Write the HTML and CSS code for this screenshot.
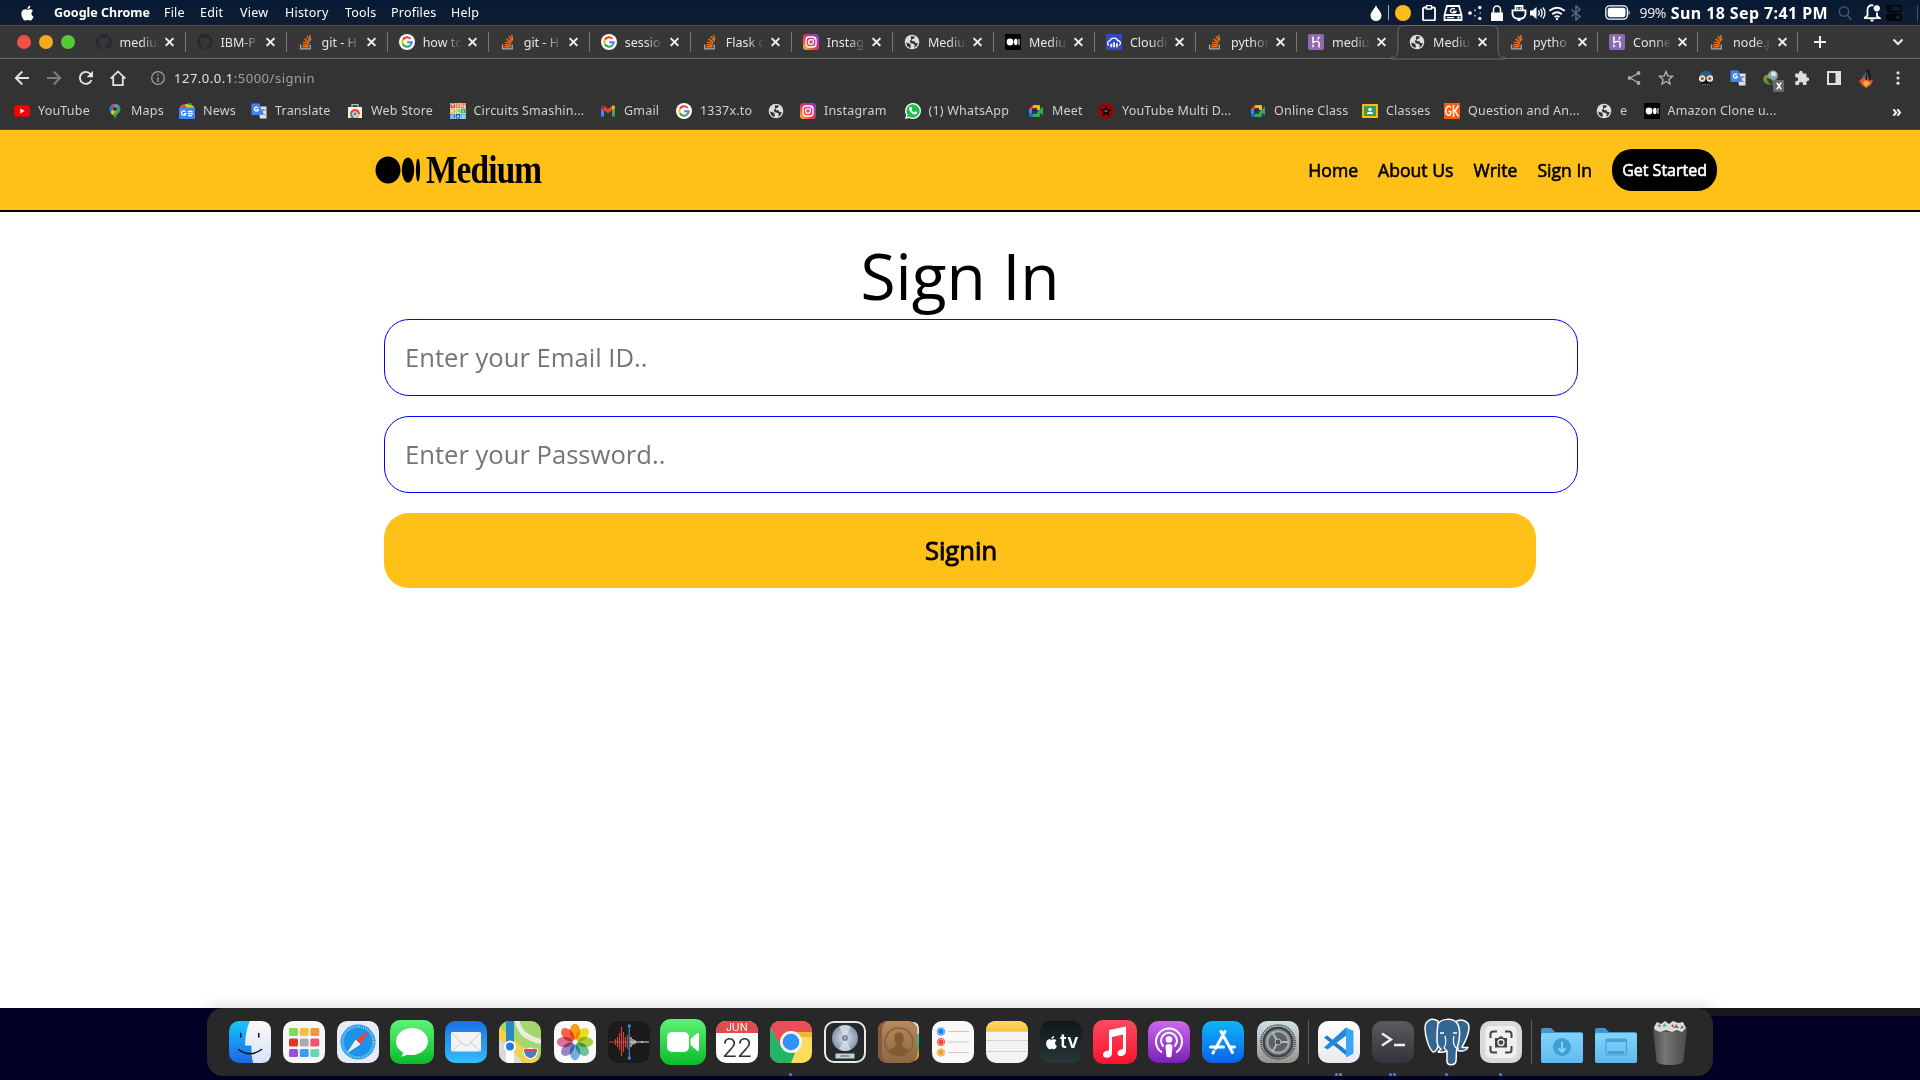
FILE: index.html
```html
<!DOCTYPE html>
<html lang="en">
<head>
<meta charset="utf-8">
<title>Medium - Sign In</title>
<link rel="stylesheet" href="styles.css">
</head>
<body>
<svg class="defs" aria-hidden="true">
  <defs>
    <linearGradient id="g-insta" x1="0" y1="1" x2="1" y2="0"><stop offset="0" stop-color="#fdc74a"/><stop offset=".35" stop-color="#f4483c"/><stop offset=".65" stop-color="#c62f92"/><stop offset="1" stop-color="#5a4fd8"/></linearGradient>
    <linearGradient id="g-green" x1="0" y1="0" x2="0" y2="1"><stop offset="0" stop-color="#5ff377"/><stop offset="1" stop-color="#0abb29"/></linearGradient>
    <linearGradient id="g-blue" x1="0" y1="0" x2="0" y2="1"><stop offset="0" stop-color="#1a72e6"/><stop offset="1" stop-color="#35bdf8"/></linearGradient>
    <linearGradient id="g-find" x1="0" y1="0" x2="0" y2="1"><stop offset="0" stop-color="#14c8fb"/><stop offset="1" stop-color="#1e65e6"/></linearGradient>
    <linearGradient id="g-face" x1="0" y1="0" x2="0" y2="1"><stop offset="0" stop-color="#fdf8f8"/><stop offset="1" stop-color="#d3e4fc"/></linearGradient>
    <linearGradient id="g-white" x1="0" y1="0" x2="0" y2="1"><stop offset="0" stop-color="#fff"/><stop offset="1" stop-color="#e9e9ee"/></linearGradient>
    <linearGradient id="g-store" x1="0" y1="0" x2="0" y2="1"><stop offset="0" stop-color="#0fb4fb"/><stop offset="1" stop-color="#0b63e6"/></linearGradient>
    <linearGradient id="g-music" x1="0" y1="0" x2="0" y2="1"><stop offset="0" stop-color="#fb4a63"/><stop offset="1" stop-color="#f9142c"/></linearGradient>
    <linearGradient id="g-pod" x1="0" y1="0" x2="0" y2="1"><stop offset="0" stop-color="#cd66f5"/><stop offset="1" stop-color="#7a21b4"/></linearGradient>
    <linearGradient id="g-term" x1="0" y1="0" x2="0" y2="1"><stop offset="0" stop-color="#5c5960"/><stop offset="1" stop-color="#34323a"/></linearGradient>
    <linearGradient id="g-set" x1="0" y1="0" x2="0" y2="1"><stop offset="0" stop-color="#cfe0e6"/><stop offset="1" stop-color="#96938c"/></linearGradient>
    <linearGradient id="g-book" x1="0" y1="0" x2="0" y2="1"><stop offset="0" stop-color="#b78a5f"/><stop offset="1" stop-color="#8f673f"/></linearGradient>
    <linearGradient id="g-fold" x1="0" y1="0" x2="0" y2="1"><stop offset="0" stop-color="#83d3fa"/><stop offset="1" stop-color="#5cbbee"/></linearGradient>
    <linearGradient id="g-bin" x1="0" y1="0" x2="1" y2="0"><stop offset="0" stop-color="#4b4b4b"/><stop offset=".35" stop-color="#777674"/><stop offset="1" stop-color="#4a4a49"/></linearGradient>
    <linearGradient id="g-note" x1="0" y1="0" x2="0" y2="1"><stop offset="0" stop-color="#ffd968"/><stop offset="1" stop-color="#f8c63c"/></linearGradient>
    <radialGradient id="g-disc"><stop offset="0" stop-color="#8a98ad"/><stop offset=".3" stop-color="#c5cedd"/><stop offset="1" stop-color="#8493ac"/></radialGradient>

    <symbol id="apple" viewBox="0 0 24 24"><path d="M16.6 12.7c0-2.4 2-3.6 2.1-3.7-1.2-1.7-3-1.9-3.6-1.9-1.5-.2-3 .9-3.8.9s-2-.9-3.200-.9C6.400 7.100 4.900 8.100 4 9.600c-1.800 3-.5 7.500 1.200 10 .9 1.200 1.900 2.600 3.200 2.500 1.300-.1 1.800-.8 3.300-.8s2 .8 3.300.8 2.200-1.200 3-2.400c1-1.400 1.400-2.700 1.400-2.800 0 0-2.800-1-2.800-4.200zM14.100 5.400c.7-.8 1.200-2 1-3.200-1 0-2.200.7-2.900 1.500-.6.7-1.200 1.900-1 3 1.100.1 2.200-.5 2.900-1.300z"/></symbol>
    <symbol id="github" viewBox="0 0 16 16"><path fill="#24292e" d="M8 0a8 8 0 0 0-2.500 15.600c.4.100.5-.2.500-.4v-1.500c-2.200.5-2.700-.9-2.700-.9-.4-.9-.9-1.200-.9-1.200-.7-.5.1-.5.1-.5.800.1 1.200.8 1.200.8.700 1.200 1.900.9 2.300.7.100-.5.300-.9.500-1.100-1.800-.2-3.600-.9-3.600-4 0-.9.300-1.600.8-2.100-.1-.2-.4-1 .1-2.100 0 0 .7-.2 2.200.8a7.600 7.600 0 0 1 4 0c1.500-1 2.200-.8 2.200-.8.400 1.100.2 1.900.1 2.100.5.600.8 1.300.8 2.100 0 3.100-1.900 3.700-3.700 3.900.3.300.6.800.6 1.500v2.200c0 .2.100.5.500.4A8 8 0 0 0 8 0z"/></symbol>
    <symbol id="stack" viewBox="0 0 16 16"><path fill="none" stroke="#a9adb2" stroke-width="1.300" d="M2.600 10.500v4.300h9.600v-4.300"/><path fill="none" stroke="#f0701a" stroke-width="1.400" d="M4.300 12.700h6.200M4.500 10.500l6.100.7M5.200 7.800l5.700 1.800M6.500 4.900l4.900 3.500M8.900 2.200l3.400 5M11.600.8l1.100 5.400"/></symbol>
    <symbol id="google" viewBox="0 0 16 16"><circle cx="8" cy="8" r="8" fill="#fff"/><g fill="none" stroke-width="2.100"><path stroke="#ea4335" d="M11.500 4.900A4.700 4.700 0 0 0 3.900 5.700"/><path stroke="#fbbc05" d="M3.900 5.700a4.700 4.700 0 0 0 0 4.600"/><path stroke="#34a853" d="M3.900 10.300a4.700 4.700 0 0 0 7.300 1.100"/><path stroke="#4285f4" d="M11.200 11.400A4.700 4.700 0 0 0 12.700 8.200H8.200"/></g></symbol>
    <symbol id="insta" viewBox="0 0 16 16"><rect width="16" height="16" rx="3.500" fill="url(#g-insta)"/><g fill="none" stroke="#fff" stroke-width="1.300"><rect x="3" y="3" width="10" height="10" rx="3"/><circle cx="8" cy="8" r="2.400"/></g><circle cx="11" cy="5" r=".8" fill="#fff"/></symbol>
    <symbol id="globe" viewBox="0 0 16 16"><circle cx="8" cy="8" r="7.300" fill="#dedede"/><path fill="#333" d="M2.200 8.500 6 9.800l.8 1.700L6.500 14C4 13.500 2.300 11.500 2.200 8.500zM6.800 2.200 11 2.500l-1 2-2 .7-.5 1.800 2.800.2 1.500 2 2-.2c-.3 2.200-1.800 4-3.800 4.600l1-2.300-1.600-1.600-2.700-.5-1-2 1.500-1.800z"/></symbol>
    <symbol id="med" viewBox="0 0 16 16"><rect width="16" height="16" rx="1" fill="#000"/><circle cx="5" cy="8" r="3.400" fill="#fff"/><ellipse cx="10.800" cy="8" rx="1.800" ry="3.200" fill="#fff"/><rect x="13.500" y="5" width="1" height="6" fill="#fff"/></symbol>
    <symbol id="cloud" viewBox="0 0 16 16"><rect width="16" height="16" fill="#3448c5"/><path fill="none" stroke="#fff" stroke-width="1.300" d="M3 11.500C.5 10 1.500 6.800 4 6.800c1-3.300 6.500-3.600 7.600-.3 3 .1 4 3.700 1.500 5"/><path stroke="#fff" stroke-width="1.800" d="M5.300 9.800v3.500M8.100 8.200v5.100M10.900 9.200v4.100"/></symbol>
    <symbol id="heroku" viewBox="0 0 16 16"><rect width="16" height="16" rx="2" fill="#8f69b3"/><path fill="none" stroke="#fff" stroke-width="1.500" d="M5 2.500v6c2-1.200 6-2 6 .6v4.400M11 2.500c0 1.300-.6 2.200-1.300 3"/><path fill="#fff" d="m4.300 10.300 2.300 1.700-2.300 1.700z"/></symbol>
    <symbol id="yt" viewBox="0 0 16 16"><rect y="2.300" width="16" height="11.500" rx="3" fill="#f00"/><path fill="#fff" d="m6.300 5.500 4.400 2.500-4.400 2.500z"/></symbol>
    <symbol id="maps" viewBox="0 0 16 16"><path fill="#34a853" d="M2.500 6.200C2.500-.7 13.500-.7 13.500 6.200 13.500 10 9 11 8 16 7 11 2.500 10 2.500 6.200z"/><path fill="#ea4335" d="M3.600 2.800 6.400 5.300 8 1V1C6 .9 4.300 1.700 3.600 2.800z"/><path fill="#4285f4" d="M8 1c2 0 3.700.8 4.600 2.200L8.800 7.700 6.200 5.500z"/><path fill="#fbbc04" d="m3.500 9.300 6-7 .6 5.300-4.700 4.500z"/><path fill="#1a73e8" d="M3.600 2.800 6.400 5.300 3.200 9C2 6.500 2.500 4 3.600 2.800z"/><circle cx="8" cy="6" r="2" fill="#333"/></symbol>
    <symbol id="news" viewBox="0 0 16 16"><path fill="#34a853" d="M2 2 12 0l2 6H2z"/><path fill="#fbbc04" d="m6 1 9 2-1 4H6z"/><path fill="#ea4335" d="M1 3h6v4H1z"/><rect y="4.500" width="16" height="11.500" rx="1" fill="#4285f4"/><path fill="none" stroke="#fff" stroke-width="1.300" d="M6.500 8.700a2.200 2.200 0 1 0 .4 1.900H5M9 8.500h4.500M9 10.600h5M9 12.600h4"/></symbol>
    <symbol id="trans" viewBox="0 0 16 16"><path fill="#dfe3e8" d="M7 3.500h8.500v12H9z"/><path fill="none" stroke="#6b7c8c" d="M9.500 7h5M12 6v1c-.3 2-1.500 3.500-2.500 4.500M10.500 8.500l3.500 4"/><path fill="#4285f4" d="M.5.500h8L12 12H.5z"/><path fill="none" stroke="#fff" stroke-width="1.200" d="M7 4.800a2 2 0 1 0 .4 1.700H5.500"/></symbol>
    <symbol id="store" viewBox="0 0 16 16"><path fill="none" stroke="#bbb" stroke-width="1.300" d="M5 4V1.700h6V4"/><path fill="#eee" d="M1 4h14v11H1z"/><path fill="#ea4335" d="M3 11a5 5 0 0 1 10 0z"/><path fill="#34a853" d="M3 11h3l1 4H4z"/><path fill="#fbbc04" d="M9 11h4l-2 4H7z"/><circle cx="8" cy="11" r="2.300" fill="#4285f4" stroke="#fff"/></symbol>
    <symbol id="tink" viewBox="0 0 16 16"><rect width="16" height="16" fill="#fff"/><path fill="#e8453c" d="M.3.300h4.800v4.800H.3z"/><path fill="#f2803e" d="M5.600.3h4.800v4.800H5.600z"/><path fill="#f05a35" d="M10.900.3h4.800v4.800h-4.800z"/><path fill="#f5a623" d="M.3 5.600h4.800v4.800H.3z"/><path fill="#8cc63f" d="M5.600 5.600h4.800v4.800H5.600z"/><path fill="#3aaa57" d="M10.900 5.600h4.800v4.800h-4.800z"/><path fill="#2d7fc4" d="M.3 10.900h4.800v4.800H.3z"/><path fill="#1b5fa8" d="M5.600 10.900h4.800v4.800H5.600z"/><path fill="#3aa6dd" d="M10.900 10.900h4.800v4.800h-4.800z"/><path stroke="#fff" stroke-width=".8" fill="none" d="M1.400 1.600h2.800M2.800 1.600v2.800M8 1.300v3M12 4.500v-3l2.500 3v-3M1.700 6.600v3M4 6.500 2 8l2 1.600M9 7H7v2.500h2M13 6.600v3M4 12.200H1.800v2.500H4M7 14.700l1-2.500 1 2.500M12.500 12v3h1l1-1.500-1-1.500z"/></symbol>
    <symbol id="gmail" viewBox="0 0 16 16"><path fill="#4285f4" d="M1 4.500v9h3V7z"/><path fill="#34a853" d="M15 4.500v9h-3V7z"/><path fill="#c5221f" d="M1 4.500C1 2.500 3 2 4 3v4.300L1 5z"/><path fill="#fbbc04" d="M15 4.500c0-2-2-2.500-3-1.500v4.300L15 5z"/><path fill="#ea4335" d="m4 3 4 3 4-3v4.300l-4 3-4-3z"/></symbol>
    <symbol id="whats" viewBox="0 0 16 16"><path fill="#fff" d="M8 0a8 8 0 0 1 0 16c-1.400 0-2.700-.3-3.800-1L0 16l1.100-4A8 8 0 0 1 8 0z"/><path fill="#20bd4e" d="M8 1.300a6.700 6.700 0 1 1-3.500 12.400l-2.600.6.700-2.500A6.700 6.700 0 0 1 8 1.300z"/><path fill="#fff" d="m5.500 4 1 .1.700 1.800-.7 1c.6 1.200 1.500 2 2.700 2.500l1-1.100 1.900 1c0 1.500-1 2.200-2.200 2.100C6.800 11 4 8 4.200 5.500c0-.6.500-1.300 1.300-1.500z"/></symbol>
    <symbol id="meet" viewBox="0 0 16 16"><path fill="#ea4335" d="M1 6 5 2v4z"/><path fill="#4285f4" d="M1 6h3v5H1z"/><path fill="#1967d2" d="M1 10.500h3.500V14H2q-1 0-1-1z"/><path fill="#fbbc04" d="M5 2h6q1 0 1 1v4H9V5H5z"/><path fill="#34a853" d="M4.500 10.800H9V9l6-5.500v9L12 10v3q0 1-1 1H4.500z"/></symbol>
    <symbol id="multi" viewBox="0 0 16 16"><circle cx="8" cy="8" r="8" fill="#8e0808"/><path fill="#140303" d="m8 2 1.600 4.200 4.400.2-3.500 2.700 1.200 4.400L8 11l-3.700 2.500 1.200-4.400L2 6.400l4.400-.2z"/><path stroke="#c99" d="M6.500 8h3"/></symbol>
    <symbol id="classr" viewBox="0 0 16 16"><rect y="1" width="16" height="14" rx="1" fill="#fbbc04"/><path fill="#3c9a5b" d="M2 3h12v10H2z"/><circle cx="8" cy="6.300" r="1.600" fill="#fff"/><path fill="#fff" d="M4.800 11c0-3 6.400-3 6.400 0z"/></symbol>
    <symbol id="gk" viewBox="0 0 16 16"><rect width="16" height="16" fill="#ff5a0a"/><path fill="none" stroke="#fff" stroke-width="1.500" d="M7 4.500C4 1.500 1.700 5 1.700 8s2.500 6 5 3V8.500H4.500M9.500 2v12M14.500 2.500 11 8l3.500 5.500"/></symbol>

    <symbol id="back" viewBox="0 0 16 16"><path fill="none" stroke="currentColor" stroke-width="1.900" d="M15 8H2M8.300 1.500 1.800 8l6.500 6.500"/></symbol>
    <symbol id="reload" viewBox="0 0 16 16"><path fill="none" stroke="currentColor" stroke-width="1.900" d="M13.500 10A6 6 0 1 1 12.500 4L14 5.800"/><path fill="currentColor" d="M15 .8v6.400H8.600z"/></symbol>
    <symbol id="home" viewBox="0 0 16 16"><path fill="none" stroke="currentColor" stroke-width="1.800" d="M.6 8.600 8 1.400l7.400 7.200M3.200 7v8.100h9.600V7"/></symbol>
    <symbol id="info" viewBox="0 0 16 16"><circle cx="8" cy="8" r="6.300" fill="none" stroke="#9aa0a6" stroke-width="1.200"/><path stroke="#9aa0a6" stroke-width="1.400" d="M8 7.200V12M8 4.200v1.600"/></symbol>
    <symbol id="share" viewBox="0 0 16 16"><path fill="none" stroke="#aaa" stroke-width="1.300" d="M13 3 4 8l9 5"/><g fill="#aaa"><circle cx="12.500" cy="3" r="1.900"/><circle cx="3.500" cy="8" r="1.900"/><circle cx="12.500" cy="13" r="1.900"/></g></symbol>
    <symbol id="star" viewBox="0 0 16 16"><path fill="none" stroke="#b0b0b0" stroke-width="1.400" d="m8 1.500 1.800 4.400 4.700.4-3.600 3.100 1.100 4.600-4-2.500L4 14l1.100-4.600-3.600-3.100 4.700-.4z"/></symbol>
    <symbol id="robot" viewBox="0 0 16 16"><path fill="#25617a" d="M1 8.500C1-2 15-2 15 8.500z"/><path fill="#11181d" d="M3 9h10v5l-1.500 2h-7L3 14z"/><path stroke="#4f93a8" stroke-width="1.500" stroke-dasharray="1.500 1" d="M4 14.800h8"/><circle cx="4.200" cy="8.600" r="2.700" fill="#f7c9bb" stroke="#e8e8e8" stroke-width="1.200"/><circle cx="11.800" cy="8.600" r="2.700" fill="#f7c9bb" stroke="#e8e8e8" stroke-width="1.200"/><circle cx="4.300" cy="8.600" r="1.500" fill="#d3402c"/><circle cx="11.700" cy="8.600" r="1.500" fill="#d3402c"/></symbol>
    <symbol id="idm" viewBox="0 0 22 22"><path fill="#5f8f3e" d="M1 9q2-6 7-4l6 6-4 4q-8 0-9-6z"/><path fill="#b58a2b" d="M2 8q1-3 4-3l-2 7z"/><circle cx="11" cy="5.500" r="5" fill="#87a3b6"/><circle cx="11.500" cy="4" r="2.500" fill="#dfe5c8"/><path fill="#2f4a31" d="m4 8 5 1 3 4-4 2z"/><rect x="11" y="10" width="12" height="12" rx="2" fill="#66696c"/><path stroke="#fff" stroke-width="1.500" d="m14.800 12.700 4.400 6.600M19.200 12.700l-4.400 6.600"/></symbol>
    <symbol id="puzzle" viewBox="0 0 16 16"><path fill="#dcdcdc" d="M13.500 7.500h-1V4.800c0-.8-.6-1.300-1.300-1.300H8.700v-1a1.800 1.800 0 0 0-3.600 0v1H2.500c-.8 0-1.300.5-1.300 1.300v2.400h1a2 2 0 0 1 0 4h-1v2.500c0 .7.500 1.300 1.300 1.300H5v-1a2 2 0 0 1 4 0v1h2.300c.7 0 1.300-.6 1.300-1.300v-2.600h.9a1.800 1.800 0 0 0 0-3.600z"/></symbol>
    <symbol id="panel" viewBox="0 0 16 16"><path fill="#e0e0e0" fill-rule="evenodd" d="M1 1h14v14H1zM3 3v10h6.500V3z"/></symbol>
    <symbol id="avatar" viewBox="0 0 16 20"><path fill="#161a28" d="m9.500 0 4 8-3 5-6-2z"/><path fill="#31707a" d="m4 9 5-6-2 9z"/><path fill="#dc3b59" d="m9.500 4 1.500 9-2 1z"/><path fill="#e9582c" d="m1 13 5-4 3 4 6-1-2 5-5 3-4-3z"/><path fill="#f7b733" d="m5 15 3-3 4 3-4 4z"/></symbol>

    <symbol id="drop" viewBox="0 0 16 16"><path d="M8 0c1 4 5.500 6.500 5.500 10.500a5.500 5.500 0 0 1-11 0C2.500 6.500 7 4 8 0z"/></symbol>
    <symbol id="clip" viewBox="0 0 16 16"><rect x="2" y="2.500" width="12" height="13" rx="1.500" fill="none" stroke="#fff" stroke-width="1.800"/><path fill="#0b1a31" stroke="#fff" stroke-width="1.300" d="M5.500.5h5v3.500h-5z"/></symbol>
    <symbol id="disk" viewBox="0 0 20 16"><path fill="none" stroke="#fff" stroke-width="1.800" d="M4 1h12l2.500 9v5h-17v-5zM1.500 10h17"/><path fill="none" stroke="#fff" stroke-width="1.300" d="M12 4a3 2 0 1 0 1 2.500h-3M4 12.700h7"/><circle cx="15.500" cy="12.600" r="1.200"/></symbol>
    <symbol id="dots" viewBox="0 0 16 16"><circle cx="2.300" cy="8" r="2.100"/><circle cx="13.500" cy="1.800" r="1.900"/><circle cx="13.500" cy="14.200" r="1.900"/><g opacity=".6"><circle cx="8" cy="4.800" r="1.200"/><circle cx="8" cy="11.200" r="1.200"/><circle cx="14" cy="8" r="1"/></g></symbol>
    <symbol id="lock" viewBox="0 0 16 16"><path d="M2 7.500h12V16H2z"/><path fill="none" stroke="#fff" stroke-width="1.600" d="M4.500 8V4.500a3.500 3.500 0 0 1 7 0V8"/></symbol>
    <symbol id="usb" viewBox="0 0 16 16"><path fill="none" stroke="#fff" stroke-width="1.800" d="M4.500 5V1h7v4M1.500 5.300h13v4q-1 4-4.500 4.400H6Q2.500 13.300 1.500 9.300z"/><path d="M6.500 13h3v3h-3zM6 2.500h1.300V4H6zM8.700 2.500H10V4H8.700z"/></symbol>
    <symbol id="vol" viewBox="0 0 16 16"><path d="M0 5.500h2.500L6.500 2v12l-4-3.500H0z"/><path fill="none" stroke="#fff" stroke-width="1.300" d="M8.300 5.500q2 2.500 0 5M10.600 4q3 4 0 8M12.900 2.500q4.200 5.500 0 11"/></symbol>
    <symbol id="wifi" viewBox="0 0 16 16"><path fill="none" stroke="#fff" stroke-width="1.800" d="M.3 5.800q7.700-6 15.400 0M3.200 9.200q4.800-4 9.600 0M5.600 12q2.400-1.800 4.800 0"/><circle cx="8" cy="14" r="1.200"/></symbol>
    <symbol id="bt" viewBox="0 0 16 16"><path fill="none" stroke="#56657a" stroke-width="1.600" d="m3.500 4.500 8.500 7L8 15V1l4 3.500-8.500 7"/></symbol>
    <symbol id="batt" viewBox="0 0 28 16"><rect x="1" y="1" width="23" height="14" rx="4" fill="none" stroke="#fff" stroke-width="1.400"/><rect x="3" y="3" width="19" height="10" rx="2.300"/><path d="M25.300 5q2.400 3 0 6z"/></symbol>
    <symbol id="find" viewBox="0 0 16 16"><circle cx="7" cy="6.500" r="4.700" fill="none" stroke="#485568" stroke-width="1.500"/><path stroke="#485568" stroke-width="1.700" d="m10.300 10 4 5"/></symbol>
    <symbol id="bell" viewBox="0 0 18 18"><path fill="none" stroke="#fff" stroke-width="1.800" d="M1 14.200h15.500L14 12V8.500M10.500 1.500C6.500.5 4.500 3 4.500 6v5.500L1.500 14"/><path d="M6.500 15.500h5L9 18z"/><circle cx="13.800" cy="4.300" r="3.100"/></symbol>
    <symbol id="tog" viewBox="0 0 16 16"><rect x=".7" y=".7" width="14.600" height="6" rx="3" fill="none" stroke="#020509" stroke-width="1.400"/><circle cx="4" cy="3.700" r="2" fill="#020509"/><rect y="8.500" width="16" height="7.500" rx="3.700" fill="#020509"/><circle cx="12" cy="12.200" r="2" fill="#14233a"/></symbol>
  </defs>
</svg>

<div class="desktop">
  <header class="menubar">
    <nav class="menus">
      <svg class="apple"><use href="#apple"/></svg>
      <b>Google Chrome</b><span>File</span><span>Edit</span><span>View</span><span>History</span><span>Tools</span><span>Profiles</span><span>Help</span>
    </nav>
    <div class="status">
      <svg><use href="#drop"/></svg><i class="bar"></i><i class="sun"></i>
      <svg><use href="#clip"/></svg><svg class="w20"><use href="#disk"/></svg><svg class="w14"><use href="#dots"/></svg>
      <svg><use href="#lock"/></svg><svg><use href="#usb"/></svg><svg><use href="#vol"/></svg><svg><use href="#wifi"/></svg><svg><use href="#bt"/></svg>
      <svg class="battery"><use href="#batt"/></svg><span class="pct">99%</span><b class="clock">Sun 18 Sep 7:41 PM</b>
      <svg><use href="#find"/></svg><svg class="bell"><use href="#bell"/></svg><svg><use href="#tog"/></svg><i class="edge"></i>
    </div>
  </header>

  <section class="browser">
    <div class="tabs">
      <div class="lights"><i class="red"></i><i class="amber"></i><i class="green"></i></div>
      <div class="tab"><svg><use href="#github"/></svg><span>mediu</span><i class="x"></i></div>
      <div class="tab"><svg><use href="#github"/></svg><span>IBM-P</span><i class="x"></i></div>
      <div class="tab"><svg><use href="#stack"/></svg><span>git - H</span><i class="x"></i></div>
      <div class="tab"><svg><use href="#google"/></svg><span>how to</span><i class="x"></i></div>
      <div class="tab"><svg><use href="#stack"/></svg><span>git - H</span><i class="x"></i></div>
      <div class="tab"><svg><use href="#google"/></svg><span>sessio</span><i class="x"></i></div>
      <div class="tab"><svg><use href="#stack"/></svg><span>Flask c</span><i class="x"></i></div>
      <div class="tab"><svg><use href="#insta"/></svg><span>Instag</span><i class="x"></i></div>
      <div class="tab"><svg><use href="#globe"/></svg><span>Mediu</span><i class="x"></i></div>
      <div class="tab"><svg><use href="#med"/></svg><span>Mediu</span><i class="x"></i></div>
      <div class="tab"><svg><use href="#cloud"/></svg><span>Cloudi</span><i class="x"></i></div>
      <div class="tab"><svg><use href="#stack"/></svg><span>python</span><i class="x"></i></div>
      <div class="tab plain"><svg><use href="#heroku"/></svg><span>mediu</span><i class="x"></i></div>
      <div class="tab active"><svg class="outline" viewBox="0 0 114 34"><path d="M0 32.500C5 32.500 7 30 7 26V7Q7 .5 13 .5H101Q107 .5 107 7V26C107 30 109 32.500 114 32.500V34H0z"/></svg><svg><use href="#globe"/></svg><span>Mediu</span><i class="x"></i></div>
      <div class="tab late"><svg><use href="#stack"/></svg><span>pytho</span><i class="x"></i></div>
      <div class="tab late"><svg><use href="#heroku"/></svg><span>Conne</span><i class="x"></i></div>
      <div class="tab late"><svg><use href="#stack"/></svg><span>node.j</span><i class="x"></i></div>
      <svg class="plus" viewBox="0 0 14 14"><path d="M7 1v12M1 7h12"/></svg>
      <svg class="chev" viewBox="0 0 12 8"><path d="m1.500 1.500 4.500 4.500 4.500-4.500"/></svg>
    </div>

    <div class="toolbar">
      <div class="nav-icons"><svg><use href="#back"/></svg><svg class="fwd"><use href="#back"/></svg><svg><use href="#reload"/></svg><svg><use href="#home"/></svg></div>
      <div class="address"><svg><use href="#info"/></svg><span>127.0.0.1<em>:5000/signin</em></span></div>
      <div class="page-acts"><svg><use href="#share"/></svg><svg><use href="#star"/></svg></div>
      <div class="exts"><svg><use href="#robot"/></svg><svg><use href="#trans"/></svg><svg class="idm"><use href="#idm"/></svg><svg><use href="#puzzle"/></svg><svg><use href="#panel"/></svg><svg class="ava"><use href="#avatar"/></svg><svg viewBox="0 0 16 16"><g fill="#ddd"><circle cx="8" cy="2.800" r="1.600"/><circle cx="8" cy="8" r="1.600"/><circle cx="8" cy="13.200" r="1.600"/></g></svg></div>
    </div>

    <div class="bookmarks">
      <a><svg><use href="#yt"/></svg>YouTube</a>
      <a><svg><use href="#maps"/></svg>Maps</a>
      <a><svg><use href="#news"/></svg>News</a>
      <a><svg><use href="#trans"/></svg>Translate</a>
      <a><svg><use href="#store"/></svg>Web Store</a>
      <a><svg><use href="#tink"/></svg>Circuits Smashin...</a>
      <a><svg><use href="#gmail"/></svg>Gmail</a>
      <a><svg><use href="#google"/></svg>1337x.to</a>
      <a><svg><use href="#globe"/></svg></a>
      <a><svg><use href="#insta"/></svg>Instagram</a>
      <a><svg><use href="#whats"/></svg>(1) WhatsApp</a>
      <a><svg><use href="#meet"/></svg>Meet</a>
      <a><svg><use href="#multi"/></svg>YouTube Multi D...</a>
      <a><svg><use href="#meet"/></svg>Online Class</a>
      <a><svg><use href="#classr"/></svg>Classes</a>
      <a><svg><use href="#gk"/></svg>Question and An...</a>
      <a><svg><use href="#globe"/></svg>e</a>
      <a><svg><use href="#med"/></svg>Amazon Clone u...</a>
      <b class="more">»</b>
    </div>
  </section>

  <main class="page">
    <header class="site-head">
      <div class="logo"><svg viewBox="0 0 45 28"><ellipse cx="13" cy="14" rx="12.500" ry="13.600"/><ellipse cx="33" cy="14" rx="6.200" ry="12.600"/><ellipse cx="43" cy="14" rx="2.100" ry="11.500"/></svg><span>Medium</span></div>
      <nav class="site-nav"><a>Home</a><a>About Us</a><a>Write</a><a>Sign In</a><a class="pill">Get Started</a></nav>
    </header>
    <form class="signin">
      <h1>Sign In</h1>
      <input type="text" placeholder="Enter your Email ID..">
      <input type="password" placeholder="Enter your Password..">
      <button type="button">Signin</button>
    </form>
    <div class="dock-shade"></div>
  </main>

  <footer class="floor">
    <div class="window-lip"></div>
    <div class="dock">
      <div class="app"><svg viewBox="0 0 42 42"><rect width="42" height="42" rx="10" fill="url(#g-find)"/><path fill="url(#g-face)" d="M21 0h11q10 0 10 10v22q0 10-10 10h-8q-2-8-1.500-17.500H16Q16.500 9 21 0z"/><path fill="none" stroke="#111" stroke-width="1.500" stroke-linecap="round" d="M9.500 28.500q11.500 8.500 23 0M11.700 12.500v3.500M29.800 12.500v3.500"/></svg></div>
      <div class="app"><svg viewBox="0 0 42 42"><rect width="42" height="42" rx="10" fill="#f8f7f7"/><g><rect x="6" y="7" width="9" height="8" rx="1.500" fill="#7fdb55"/><rect x="16.700" y="7" width="9" height="8" rx="1.500" fill="#f3c03b"/><rect x="27.300" y="7" width="9" height="8" rx="1.500" fill="#ed983b"/><rect x="6" y="17.500" width="9" height="8" rx="1.500" fill="#d9382c"/><rect x="16.700" y="17.500" width="9" height="8" rx="1.500" fill="#a9adaf"/><rect x="27.300" y="17.500" width="9" height="8" rx="1.500" fill="#ed5670"/><rect x="6" y="28" width="9" height="8" rx="1.500" fill="#9a50d6"/><rect x="16.700" y="28" width="9" height="8" rx="1.500" fill="#3d9cf5"/><rect x="27.300" y="28" width="9" height="8" rx="1.500" fill="#6fd4b4"/></g></svg></div>
      <div class="app"><svg viewBox="0 0 42 42"><rect width="42" height="42" rx="10" fill="#e9ecf7"/><circle cx="21" cy="21" r="17.500" fill="#1b93e8"/><circle cx="21" cy="21" r="15.500" fill="none" stroke="#b9e4fb" stroke-width="2.500" stroke-dasharray=".7 1.300"/><path fill="#e9453f" d="M32.500 10 23.500 23.500 18.700 18.500z"/><path fill="#f1f1f1" d="M9.500 32.500 23.500 23.500 18.700 18.500z"/></svg></div>
      <div class="app big44"><svg viewBox="0 0 44 44"><rect width="44" height="44" rx="10" fill="url(#g-green)"/><path fill="#fff" d="M22 8c9 0 16 6 16 13.300S31 35 22 35q-2.500 0-4.500-.5-2.500 2-6.500 2 2-2 2-4Q6 28.500 6 21.300C6 14 13 8 22 8z"/></svg></div>
      <div class="app"><svg viewBox="0 0 42 42"><rect width="42" height="42" rx="10" fill="url(#g-blue)"/><rect x="6" y="11" width="30" height="19.500" rx="1.500" fill="#f4f4f4"/><path fill="none" stroke="#c9c9cc" d="m6.500 11.500 11 11.500q3.500 3 7 0l11-11.500M7 30l9.500-9M35 30l-9.500-9"/></svg></div>
      <div class="app"><svg viewBox="0 0 42 42"><clipPath id="c1"><rect width="42" height="42" rx="10"/></clipPath><g clip-path="url(#c1)"><path fill="#a5d66f" d="M0 0h42v42H0z"/><path fill="#f4d04b" d="M0 5q12 13 42 34v8H20Q12 32 0 28z"/><path fill="#dfd9d3" d="M0 18q13 8 24 24H0z"/><path fill="none" stroke="#e9eddf" stroke-width="5" d="M18-4q0 20 26 25"/><path fill="#2c86c2" d="M7 0h8v24H7z"/><path fill="#fff" d="M7 28h8v14H7z"/></g><circle cx="11" cy="25.500" r="5" fill="#1a7ee0" stroke="#fff" stroke-width="2"/><path fill="#4a7bc4" stroke="#fff" stroke-width="1.200" d="M25 28q3 1 6.500-1 3.500 2 6.500 1 2 7-6.500 10Q23 35 25 28z"/><path fill="#e33f62" d="M25.200 28h12.600v3H25.200z"/></svg></div>
      <div class="app"><svg viewBox="0 0 42 42"><rect width="42" height="42" rx="10" fill="#fafafa"/><g class="petals"><ellipse cx="21" cy="10.800" rx="5.200" ry="8" fill="#fb9d16"/><ellipse cx="21" cy="10.800" rx="5.200" ry="8" fill="#ecdc1e" transform="rotate(45 21 21)"/><ellipse cx="21" cy="10.800" rx="5.200" ry="8" fill="#a6cf4a" transform="rotate(90 21 21)"/><ellipse cx="21" cy="10.800" rx="5.200" ry="8" fill="#6dc297" transform="rotate(135 21 21)"/><ellipse cx="21" cy="10.800" rx="5.200" ry="8" fill="#74aede" transform="rotate(180 21 21)"/><ellipse cx="21" cy="10.800" rx="5.200" ry="8" fill="#9a86c6" transform="rotate(225 21 21)"/><ellipse cx="21" cy="10.800" rx="5.200" ry="8" fill="#d7739f" transform="rotate(270 21 21)"/><ellipse cx="21" cy="10.800" rx="5.200" ry="8" fill="#f6624a" transform="rotate(315 21 21)"/></g></svg></div>
      <div class="app"><svg viewBox="0 0 42 42"><rect width="42" height="42" rx="10" fill="#1b1b1b"/><path stroke="#c9453e" stroke-width="1.200" d="M1 21h18M7.500 18v6M9.500 16v10M11.500 12v17M13.500 6v29M15.500 11v20M17.500 16v10M19.500 14v14"/><path stroke="#ddd" stroke-width="1.200" d="M22 21h19M23 16v10M25 18v6M27 19v4M34 20v2"/><path stroke="#4085cc" stroke-width="1.200" d="M21.300 5v32"/><circle cx="21.300" cy="5" r="1.700" fill="#4085cc"/><circle cx="21.300" cy="37" r="1.700" fill="#4085cc"/></svg></div>
      <div class="app big46"><svg viewBox="0 0 46 46"><rect width="46" height="46" rx="11" fill="url(#g-green)"/><rect x="7" y="13" width="22" height="20" rx="5" fill="#fff"/><path fill="#fff" d="m30.500 20 7-6q1.500-.5 1.500 1v16q0 1.500-1.500 1l-7-6z"/></svg></div>
      <div class="app"><div class="cal"><span>JUN</span><b>22</b></div></div>
      <div class="app"><svg viewBox="0 0 42 42"><clipPath id="c2"><rect width="42" height="42" rx="10"/></clipPath><g clip-path="url(#c2)"><path fill="#fddc5c" d="M0 0h42v42H0z"/><path fill="#ecb92f" d="M21 11h21v5H21z"/><path fill="#e94f58" d="M0 0h42v11H21L11 26 0 7z"/><path fill="#22b565" d="M0 7l12 20 13 5-4 10H0z"/></g><circle cx="21" cy="21" r="11" fill="#f4f3f4"/><circle cx="21" cy="21" r="8.300" fill="#2f92fa"/></svg><i class="run"></i></div>
      <div class="app"><svg viewBox="0 0 42 42"><rect x="1" y="1" width="40" height="40" rx="9" fill="#26292b" stroke="#e4ece9" stroke-width="2"/><circle cx="21" cy="17" r="13" fill="url(#g-disc)"/><path fill="#e0e6ef" opacity=".7" d="M21 17 15 5.500q6-3 12 0zM21 17l6 11.500q-6 3-12 0z"/><circle cx="21" cy="17" r="2.300" fill="#aab" stroke="#667"/><rect x="11.500" y="32.500" width="19" height="5" fill="#c9ced5"/><path stroke="#5b6068" d="M16.500 35h9"/></svg></div>
      <div class="app"><svg viewBox="0 0 42 42"><path fill="#e8e8e8" d="M30 1h6q5 1 5 7v5H30z"/><path fill="#1fc2c6" d="M35 13h6v8h-6z"/><path fill="#35bd4c" d="M35 21h6v9h-6z"/><path fill="#f29b1f" d="M35 30h6v4q0 4-5 6z"/><rect width="39.500" height="42" rx="9" fill="url(#g-book)"/><path fill="#7f5c40" d="M9 0Q0 1 0 9v24q0 8 9 9-5-3-5-9V9q0-6 5-9z"/><circle cx="21" cy="21" r="14" fill="none" stroke="#87613a" stroke-width="1.500"/><path fill="#825b33" d="M21 11.500c6 0 5.500 7 3 11.500l1 3 6 3q-4 5.500-10 5.500t-10-5.500l6-3 1-3c-2.500-4.500-3-11.500 3-11.500z"/></svg></div>
      <div class="app"><svg viewBox="0 0 42 42"><rect width="42" height="42" rx="10" fill="#faf9f8"/><path stroke="#c9c9c9" d="M16 10.500h21M16 21h21M16 31.500h21"/><g fill="#fff" stroke-width=".9"><circle cx="9" cy="10.500" r="3.700" stroke="#1a82fb"/><circle cx="9" cy="21" r="3.700" stroke="#fb4038"/><circle cx="9" cy="31.500" r="3.700" stroke="#f79a1d"/></g><circle cx="9" cy="10.500" r="2.700" fill="#1a82fb"/><circle cx="9" cy="21" r="2.700" fill="#fb4038"/><circle cx="9" cy="31.500" r="2.700" fill="#f79a1d"/></svg></div>
      <div class="app"><svg viewBox="0 0 42 42"><rect width="42" height="42" rx="10" fill="#f4f2f4"/><path fill="url(#g-note)" d="M0 10Q0 0 10 0h22q10 0 10 10z"/><path stroke="#c8c7ca" stroke-width=".8" d="M0 10.500h42M0 19.500h42M0 30.500h42"/></svg></div>
      <div class="app"><div class="tv"><svg fill="#fff"><use href="#apple"/></svg><span>tv</span></div></div>
      <div class="app big44"><svg viewBox="0 0 44 44"><rect width="44" height="44" rx="10" fill="url(#g-music)"/><path fill="#fff" d="M16 10 33 6.500V31c0 6-8.500 6.500-8.500 2.500 0-3 3-4 5.500-4.500V14.500L19 17v16c0 6-9 6-9 2s3.500-4 6-4.500z"/></svg></div>
      <div class="app"><svg viewBox="0 0 42 42"><rect width="42" height="42" rx="10" fill="url(#g-pod)"/><g fill="none" stroke="#fff" stroke-width="2"><path d="M14 31.500a13 13 0 1 1 14 0"/><path d="M15.500 25.500a8 8 0 1 1 11 0"/></g><circle cx="21" cy="18.500" r="3.300" fill="#fff"/><path fill="#fff" d="M17.500 26q0-3 3.500-3t3.500 3l-1 9.500q-2.500 2-5 0z"/></svg></div>
      <div class="app"><svg viewBox="0 0 42 42"><rect width="42" height="42" rx="10" fill="url(#g-store)"/><path fill="none" stroke="#fff" stroke-width="3" stroke-linecap="round" d="m19 10.500 11.500 21M23 10.500 13.500 27.500M8.500 26h13M27.500 26h5M11 32l.8-1.500"/></svg></div>
      <div class="app"><svg viewBox="0 0 42 42"><rect width="42" height="42" rx="10" fill="url(#g-set)"/><circle cx="21" cy="21" r="17" fill="none" stroke="#4c4e50" stroke-width="1.800" stroke-dasharray="1.200 .8"/><circle cx="21" cy="21" r="14.300" fill="#84898b" stroke="#3f4244" stroke-width="2.500"/><circle cx="21" cy="21" r="10.500" fill="#5f6365" stroke="#a9aeb0" stroke-width="1.500"/><path stroke="#b5babb" stroke-width="2" d="M21 21h11M21 21l-5.500 9.500M21 21l-5.500-9.500"/><circle cx="21" cy="21" r="3" fill="#505456" stroke="#b5babb"/></svg></div>
      <i class="sep"></i>
      <div class="app"><svg viewBox="0 0 42 42"><rect width="42" height="42" rx="10" fill="url(#g-white)"/><path fill="#1c7cd0" d="m6 16.500 3-2L29 30v5z"/><path fill="#2489db" d="M6 26.500 28 6.500l1 7.500L9.500 28.500z"/><path fill="#3ba5f4" d="m28 6.500 7.500 3.500v22.500L28 36.500z"/></svg><i class="run pair"></i><i class="run dim"></i></div>
      <div class="app"><svg viewBox="0 0 42 42"><rect width="42" height="42" rx="10" fill="url(#g-term)"/><path fill="none" stroke="#f2f2f2" stroke-width="2.300" d="m10 12.500 9 6-9 6M22 24h11"/></svg><i class="run pair"></i><i class="run"></i></div>
      <div class="app big48"><svg viewBox="0 0 46 48"><g fill="#336791" stroke="#fff" stroke-width="1.500" stroke-linejoin="round"><path d="M31 4c6-4 14-1 14 5 0 8-4 15-7 20 2 1 4 .5 6 .5-2 4-7 4-10 3z"/><path d="M14 3C7-1 1 3 1 10c0 8 4 21 8 24 3 1 5-5 6-8z"/><path d="M14 6c3-6 15-6 19-1 4 6 3 17 0 25-1 3-.5 9-1 13-1 5-9 5-9 0V33q-5 2-9 1l3-3q-4-2-4-9 0-10 1-16z"/></g><path stroke="#fff" stroke-width="1.500" d="M16 15h4M29 15h4" fill="none"/><path fill="none" stroke="#fff" stroke-width="1.200" d="M21 18q2 7-1 12l3 3M30 18q-2 7 2 12"/></svg><i class="run"></i></div>
      <div class="app"><svg viewBox="0 0 42 42"><rect width="42" height="42" rx="10" fill="#d9d9d9"/><rect x="5.500" y="5" width="31" height="32" rx="5" fill="#efeff0"/><g fill="none" stroke="#444" stroke-width="2"><path d="M17 10.500h-4q-2.500 0-2.500 2.500v4M25 10.500h4q2.500 0 2.500 2.500v4M10.500 25v4q0 2.500 2.500 2.500h4M31.500 25v4q0 2.500-2.500 2.500h-4"/></g><path fill="#444" d="M15 17h3.500l1-1.500h3L23.500 17H27v9.500H15z"/><circle cx="21" cy="21.500" r="3" fill="#444" stroke="#efeff0" stroke-width="1.300"/></svg><i class="run"></i></div>
      <i class="sep"></i>
      <div class="app"><svg viewBox="0 0 42 42"><path fill="#3b98d3" d="M0 12V9q0-2 2-2h8l4 4h26q2 0 2 2v6H0z"/><path fill="url(#g-fold)" d="M0 14q0-2 2-2h38q2 0 2 2v26q0 2-2 2H2q-2 0-2-2z"/><circle cx="21" cy="26" r="9" fill="#409fd5"/><path fill="none" stroke="#8dd6fb" stroke-width="1.800" d="M21 21v10M17.500 27.500 21 31l3.500-3.500"/></svg></div>
      <div class="app"><svg viewBox="0 0 42 42"><path fill="#3b98d3" d="M0 12V9q0-2 2-2h8l4 4h26q2 0 2 2v6H0z"/><path fill="url(#g-fold)" d="M0 14q0-2 2-2h38q2 0 2 2v26q0 2-2 2H2q-2 0-2-2z"/><rect x="11" y="18" width="20.500" height="16" rx="2" fill="none" stroke="#46a3da" stroke-width="1.200"/><path fill="#46a3da" d="M11 18h20.500v3H11zM13 30h16v3H13z"/></svg></div>
      <div class="app big48"><svg viewBox="0 0 46 48"><path fill="url(#g-bin)" d="M6 11h34l-3.500 32q-.5 4-13.500 4T9.500 43z"/><ellipse cx="23" cy="11" rx="17" ry="3" fill="#4a4a48"/><path fill="#dcdcd8" d="m7 9 3-5 4 2 4-3 4 3 4-3 5 2 5-1 3 6-4 4-5-2-5 2-6-2-6 2-5-2z"/><path fill="#777" d="m10 8 3-2 1 3zM29 6l3 4h-5zM35 7l2 3-4 1z"/><path fill="#4cae97" d="m17 5 3 3-4 1z"/><path fill="#a0553b" d="m24 8 2-2 1 4z"/></svg></div>
    </div>
  </footer>
</div>
</body>
</html>
```
FILE: styles.css
```css
* { box-sizing: border-box; }
body { margin: 0; overflow: hidden; background: #fff; font-family: "Noto Sans", "Open Sans", sans-serif; }
i, em { font-style: normal; }
svg { display: block; flex: none; width: 16px; height: 16px; overflow: visible; }
.defs { position: absolute; width: 0; height: 0; }
.desktop { width: 1920px; height: 1080px; display: flex; flex-direction: column; overflow: hidden; }

/* System menu bar */
.menubar { height: 25px; flex: none; display: flex; justify-content: space-between; background: linear-gradient(#061a33, #101d33); color: #fff; font-size: 12.5px; }
.menus { display: grid; grid-template-columns: 36px 110px 36px 40px 45px 60px 46px 60px 40px; padding-left: 18px; align-items: center; white-space: nowrap; letter-spacing: .2px; }
.menus b { letter-spacing: 0; }
.apple { width: 20px; height: 18px; fill: #fff; }
.status { width: 556px; display: grid; grid-template-columns: 24px 1px 28px 23px 26px 18px 26px 18px 19px 20px 18px 47px 34px 162px 34px 20px 23px 15px; align-items: center; justify-items: center; white-space: nowrap; }
.status svg { fill: #fff; }
.status .w20 { width: 20px; }
.status .w14 { width: 14px; height: 14px; }
.status .battery { width: 28px; height: 15px; justify-self: end; }
.status .bell { width: 18px; height: 18px; }
.bar { width: 1px; height: 15px; background: #aab; }
.sun { width: 16px; height: 16px; border-radius: 50%; background: #fdbc17; }
.pct { justify-self: end; font-size: 14px; letter-spacing: -.4px; color: #e8e8e8; }
.clock { justify-self: end; font-size: 16px; letter-spacing: .4px; }
.edge { justify-self: end; margin-right: 2px; width: 1px; height: 16px; background: #45566c; }

/* Browser chrome */
.browser { height: 105px; flex: none; background: #333; border-top: 1px solid #4b4b4b; border-bottom: 1px solid #484848; color: #d8d8d8; font-size: 12.500px; }
.tabs { height: 33px; display: flex; align-items: center; border-bottom: 1px solid #6a6a6a; background: #373737; }
.lights { width: 84.500px; padding-left: 17px; display: flex; gap: 8px; }
.lights i { width: 14px; height: 14px; border-radius: 50%; }
.red { background: #ec524a; }
.amber { background: #f2ad1c; }
.green { background: #58c936; }
.tab { position: relative; width: 101.050px; height: 20px; flex: none; padding-left: 11px; display: flex; align-items: center; border-right: 1px solid #767676; }
.tab span { width: 42px; margin: 0 3px 0 8px; white-space: nowrap; color: #e6e6e6; -webkit-mask-image: linear-gradient(90deg, #000 50%, transparent 92%); mask-image: linear-gradient(90deg, #000 50%, transparent 92%); }
.tab .x { position: relative; width: 10px; height: 11px; }
.tab .x::before, .tab .x::after { content: ""; position: absolute; left: -.8px; top: 4.600px; width: 11px; height: 1.900px; background: #f0f0f0; transform: rotate(45deg); }
.tab .x::after { transform: rotate(-45deg); }
.tab.plain, .tab.active { border-right-color: transparent; }
.tab.active { width: 100px; }
.tab.late { width: 100px; }
.tab .outline { position: absolute; left: -7px; top: -7px; width: 114px; height: 34px; }
.outline path { fill: #333; stroke: #6a6a6a; stroke-width: 1; }
.tab.active > :not(.outline) { z-index: 1; }
.plus { width: 14px; height: 14px; margin-left: 15px; }
.chev { width: 12px; height: 8px; margin-left: auto; margin-right: 16px; }
.plus path, .chev path { fill: none; stroke: #eee; stroke-width: 2; }

.toolbar { height: 38px; padding: 0 14px; display: flex; align-items: center; }
.nav-icons { display: flex; gap: 16px; color: #e4e4e4; }
.fwd { color: #7e7e7e; transform: scaleX(-1); }
.address { display: flex; align-items: center; gap: 8px; margin-left: 24px; font-size: 13px; letter-spacing: .52px; color: #e2e2e2; }
.address em { color: #a0a0a0; }
.page-acts { display: flex; gap: 16px; margin-left: auto; margin-right: 24px; }
.exts { display: flex; gap: 16px; }
.idm { width: 22px; height: 22px; margin: -3px; transform: translate(3px, 3px); }
.ava { height: 20px; margin: -2px 0; }

.bookmarks { height: 27px; padding-left: 14px; display: grid; grid-template-columns: 93px 72px 72px 96px 102.500px 150.500px 76px 92px 32px 104.500px 123.500px 70px 152px 112px 82px 152px 47.500px 140px 1fr; align-items: center; letter-spacing: .2px; }
.bookmarks a { display: flex; align-items: center; gap: 8px; white-space: nowrap; color: #d0d0d0; }
.more { justify-self: end; margin-right: 18px; font-size: 16px; line-height: 1; color: #eee; }

/* Web page */
.page { position: relative; height: 878px; flex: none; background: #fff; font-family: "Open Sans", "Noto Sans", sans-serif; color: #000; }
.site-head { height: 82px; padding: 0 203px 0 375px; display: flex; align-items: center; justify-content: space-between; background: #ffc017; border-bottom: 2px solid #000; }
.logo { display: flex; align-items: center; gap: 6px; }
.logo svg { width: 45px; height: 28px; }
.logo span { font: bold 39px/40px "Liberation Serif", serif; letter-spacing: -1px; transform: scaleX(.855); transform-origin: left; }
.site-nav { display: flex; align-items: center; gap: 20px; font-size: 17.600px; -webkit-text-stroke: .6px currentColor; }
.pill { height: 42px; padding: 0 10px; border-radius: 20px; background: #000; color: #fff; font-size: 16px; line-height: 42px; }
.signin { width: 1152px; margin: 20px auto 0; display: flex; flex-direction: column; gap: 20px; }
.signin h1 { margin: 0 0 -20px; font-size: 64px; line-height: 87px; font-weight: 400; text-align: center; }
.signin input { width: 1194px; height: 77px; padding: 0 20px; border: 1px solid #00f; border-radius: 25px; background: #fff; font: 25.600px "Open Sans", sans-serif; }
.signin input::placeholder { color: #757575; }
.signin button { height: 75px; padding: 0 5px 1px 7px; border: 0; border-radius: 25px; background: #ffc017; color: #000; font: 25.600px "Open Sans", sans-serif; -webkit-text-stroke: .9px #000; }
.dock-shade { position: absolute; left: 196px; right: 196px; bottom: 0; height: 9px; background: linear-gradient(#fafafa, #ececec); -webkit-mask-image: linear-gradient(90deg, transparent, #000 24px, #000 calc(100% - 24px), transparent); mask-image: linear-gradient(90deg, transparent, #000 24px, #000 calc(100% - 24px), transparent); }

/* Dock */
.floor { flex: 1; position: relative; background: #020024; }
.window-lip { position: absolute; right: 0; top: 0; width: 260px; height: 8px; background: #17171b; }
.dock { position: relative; width: 1506px; height: 68px; margin-left: 207px; padding: 0 16px; display: flex; align-items: center; border-radius: 16px; background: #282828; }
.app { position: relative; flex: 1; height: 68px; display: flex; align-items: center; justify-content: center; }
.app > svg { width: 42px; height: 42px; }
.app.big44 > svg { width: 44px; height: 44px; }
.app.big46 > svg { width: 46px; height: 46px; }
.app.big48 > svg { width: 46px; height: 48px; }
.petals { isolation: isolate; }
.petals ellipse { mix-blend-mode: multiply; }
.sep { width: 7px; height: 44px; border-left: 3px solid transparent; border-right: 3px solid transparent; background: #5f5f5f; background-clip: padding-box; }
.run { position: absolute; bottom: 0; left: calc(50% - 2px); width: 3px; height: 3px; border-radius: 50%; background: #3f8af2; }
.run.pair { left: calc(50% - 4px); }
.run + .run { left: 50%; }
.run.dim { background: #8b8b8b; }
.cal { width: 42px; height: 42px; border-radius: 10px; overflow: hidden; background: #fff; display: flex; flex-direction: column; align-items: center; color: #333; }
.cal span { width: 42px; height: 12px; background: #de4d4b; color: #fff; font: 10.500px/13px "Inter", sans-serif; text-align: center; }
.cal b { font: 300 26px/30px "Inter", sans-serif; letter-spacing: -1px; }
.tv { width: 42px; height: 42px; border-radius: 10px; background: linear-gradient(#101618, #283839); display: flex; align-items: center; justify-content: center; color: #fff; font: 600 19px/20px "Inter", sans-serif; }
.tv svg { width: 16px; height: 17px; }
```
